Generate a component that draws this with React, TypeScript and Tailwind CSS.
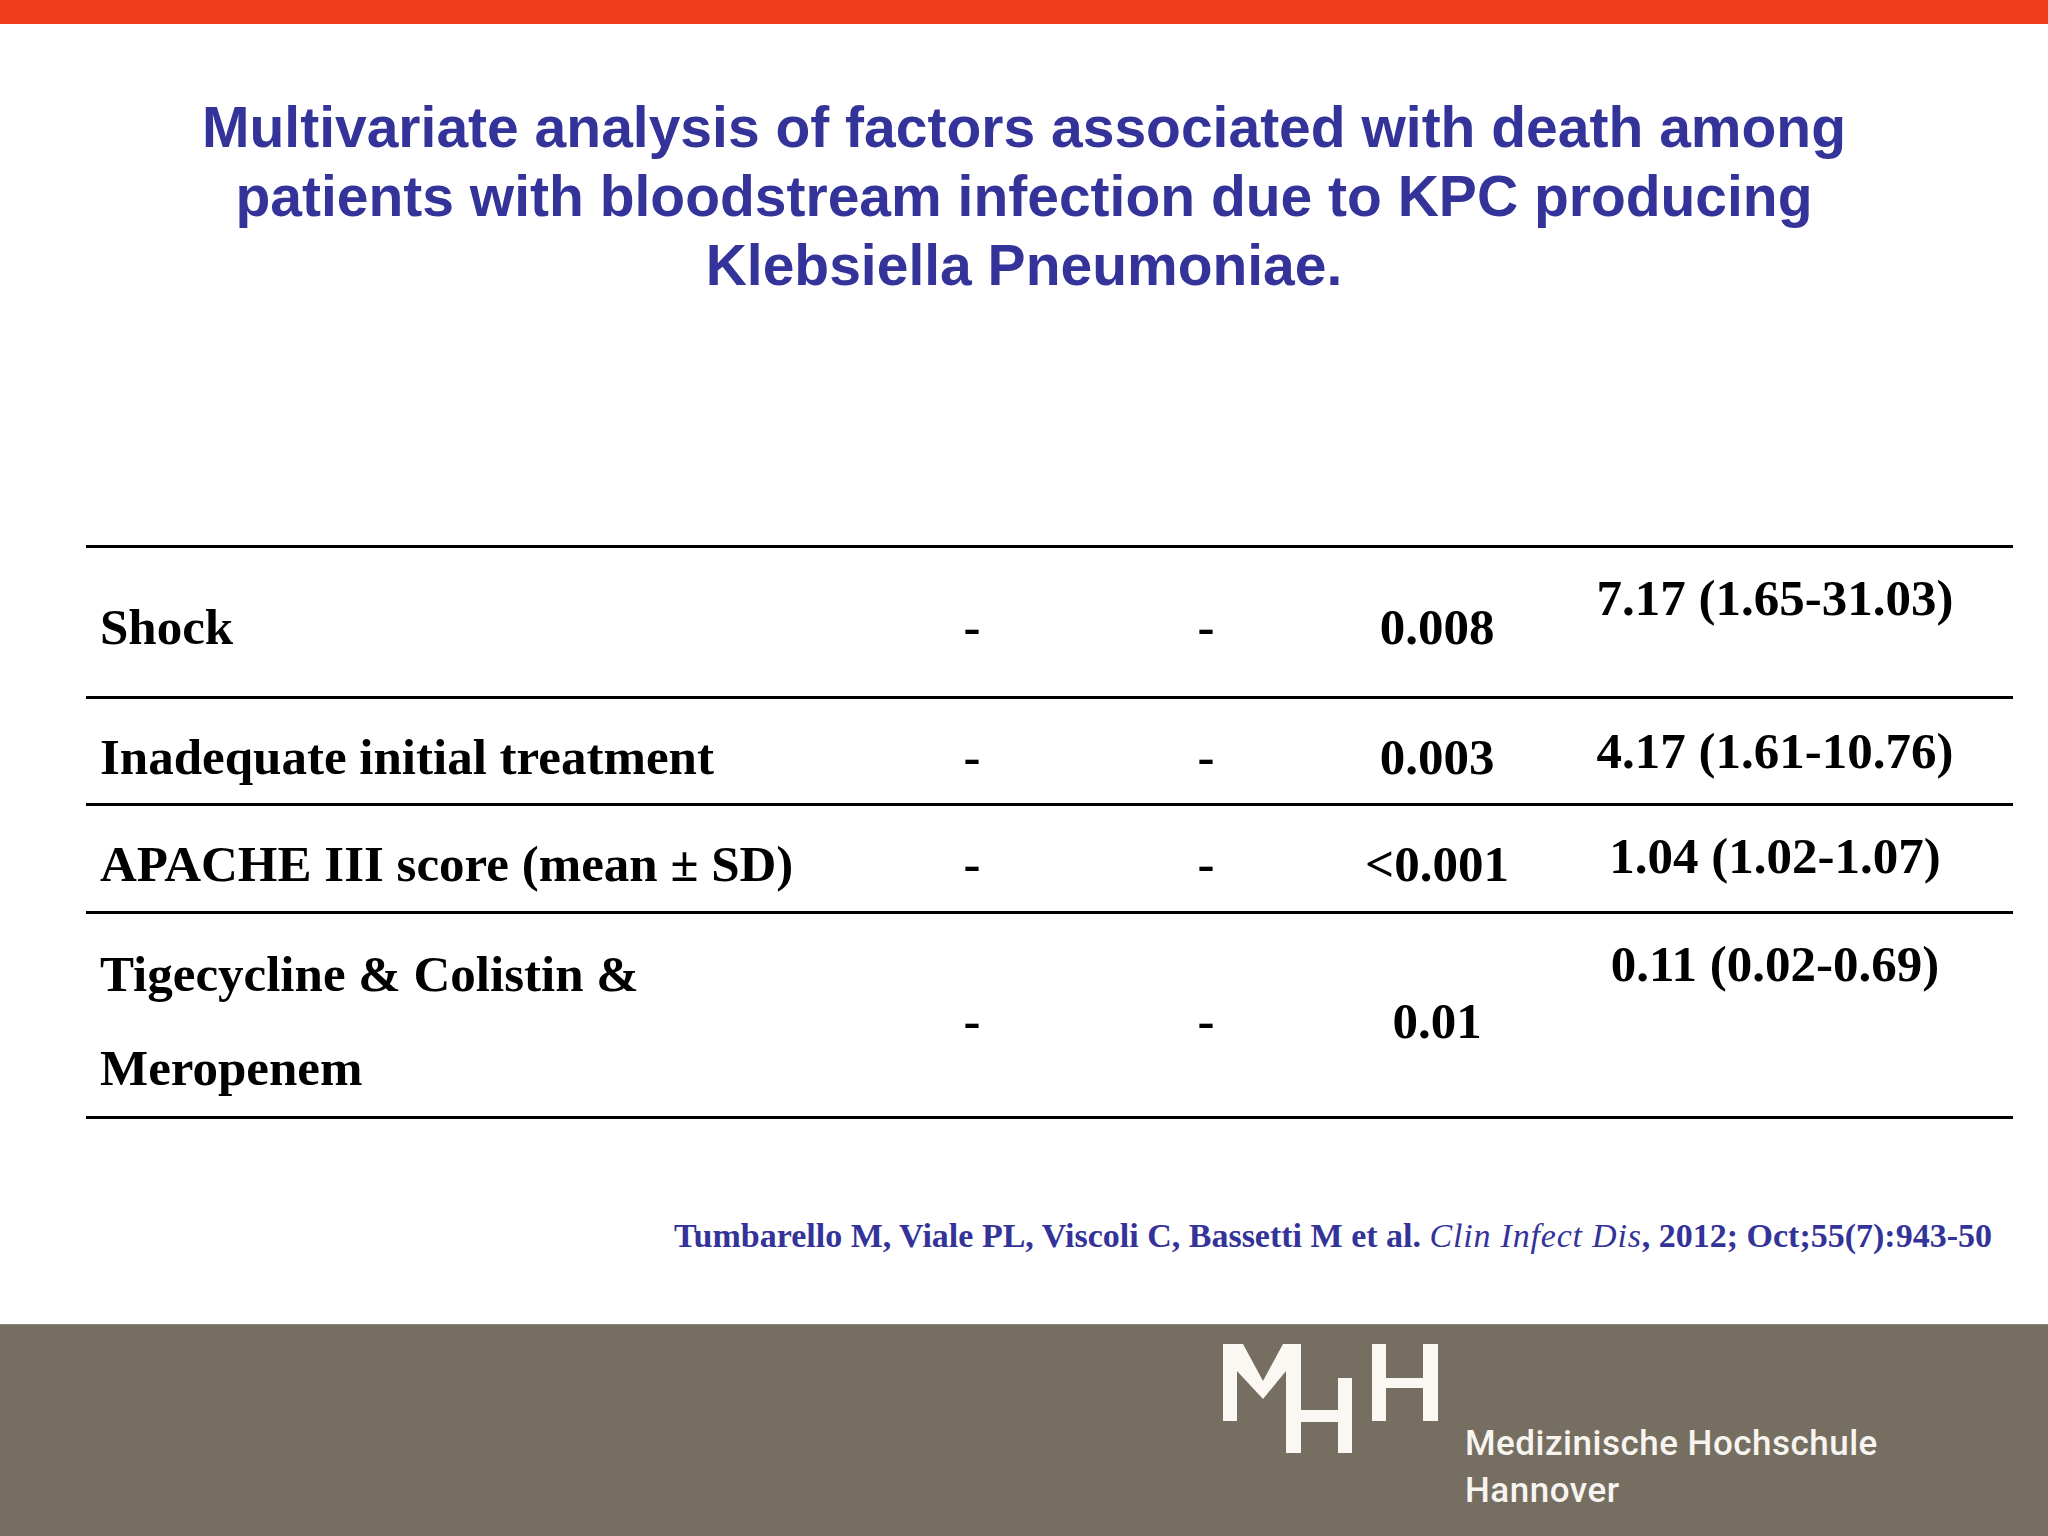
import React from "react";

function Logo() {
  return (
    <svg width="240" height="130" viewBox="0 0 240 130" className="block shrink-0 mt-[6px]">
      <g fill="#fbf8f3">
        <polygon points="13,13 33,13 53,50 73,13 91,13 91,122 76,122 76,40 53,68 27,40 27,90 13,90" />
        <rect x="91" y="79" width="37" height="12" />
        <rect x="128" y="47" width="14" height="75" />
        <rect x="162" y="13" width="14" height="77" />
        <rect x="176" y="47" width="37" height="10" />
        <rect x="213" y="13" width="15" height="77" />
      </g>
    </svg>
  );
}

export default function App() {
  const serif = "font-['Liberation_Serif','Times_New_Roman',serif]";
  return (
    <div className="w-[2048px] h-[1536px] bg-white flex flex-col overflow-hidden">
      <div className="h-[24px] bg-[#ef3e1c] shrink-0" />
      <div className="flex-1 flex flex-col">
        <h1 className="mt-[69px] text-center font-bold text-[57px] leading-[69px] text-[#333399] font-['Liberation_Sans',Arial,sans-serif]">
          Multivariate analysis of factors associated with death among
          <br />
          patients with bloodstream infection due to KPC producing
          <br />
          Klebsiella Pneumoniae.
        </h1>

        <div className={`mt-[245px] ml-[86px] w-[1927px] text-black font-bold text-[51px] leading-none ${serif}`}>
          <div className="grid grid-cols-[786px_200px_268px_197px_476px] h-[151px] border-t-[3px] border-black">
            <div className="pl-[14px] pt-[54px]">Shock</div>
            <div className="text-center pt-[54px]">-</div>
            <div className="text-center pt-[54px]">-</div>
            <div className="text-center pt-[54px] pr-[3px]">0.008</div>
            <div className="text-center pt-[25px]">7.17 (1.65-31.03)</div>
          </div>
          <div className="grid grid-cols-[786px_200px_268px_197px_476px] h-[107px] border-t-[3px] border-black">
            <div className="pl-[14px] pt-[33px]">Inadequate initial treatment</div>
            <div className="text-center pt-[33px]">-</div>
            <div className="text-center pt-[33px]">-</div>
            <div className="text-center pt-[33px] pr-[3px]">0.003</div>
            <div className="text-center pt-[27px]">4.17 (1.61-10.76)</div>
          </div>
          <div className="grid grid-cols-[786px_200px_268px_197px_476px] h-[108px] border-t-[3px] border-black">
            <div className="pl-[14px] pt-[33px]">APACHE III score (mean ± SD)</div>
            <div className="text-center pt-[33px]">-</div>
            <div className="text-center pt-[33px]">-</div>
            <div className="text-center pt-[33px] pr-[3px]">&lt;0.001</div>
            <div className="text-center pt-[25px]">1.04 (1.02-1.07)</div>
          </div>
          <div className="grid grid-cols-[786px_200px_268px_197px_476px] h-[208px] border-t-[3px] border-b-[3px] border-black">
            <div className="pl-[14px] pt-[13px] leading-[94px]">
              Tigecycline &amp; Colistin &amp;
              <br />
              Meropenem
            </div>
            <div className="text-center pt-[82px]">-</div>
            <div className="text-center pt-[82px]">-</div>
            <div className="text-center pt-[82px] pr-[3px]">0.01</div>
            <div className="text-center pt-[25px]">0.11 (0.02-0.69)</div>
          </div>
        </div>

        <p className={`mt-[100px] pr-[56px] text-right text-[34px] leading-none font-bold text-[#333399] whitespace-nowrap ${serif}`}>
          Tumbarello M, Viale PL, Viscoli C, Bassetti M et al.{" "}
          <span className="italic font-normal tracking-[0.8px]">Clin Infect Dis</span>, 2012; Oct;55(7):943-50
        </p>
      </div>
      <div className="h-[212px] shrink-0 bg-[#776e62] border-t border-[#8a857e] flex items-start pl-[1210px]">
        <Logo />
        <div className="ml-[15px] mt-[95px] text-[35px] leading-[47px] font-medium tracking-[0.5px] text-[#f8f5f0] font-['Roboto','Open_Sans',sans-serif]">
          <div>Medizinische Hochschule</div>
          <div>Hannover</div>
        </div>
      </div>
    </div>
  );
}
